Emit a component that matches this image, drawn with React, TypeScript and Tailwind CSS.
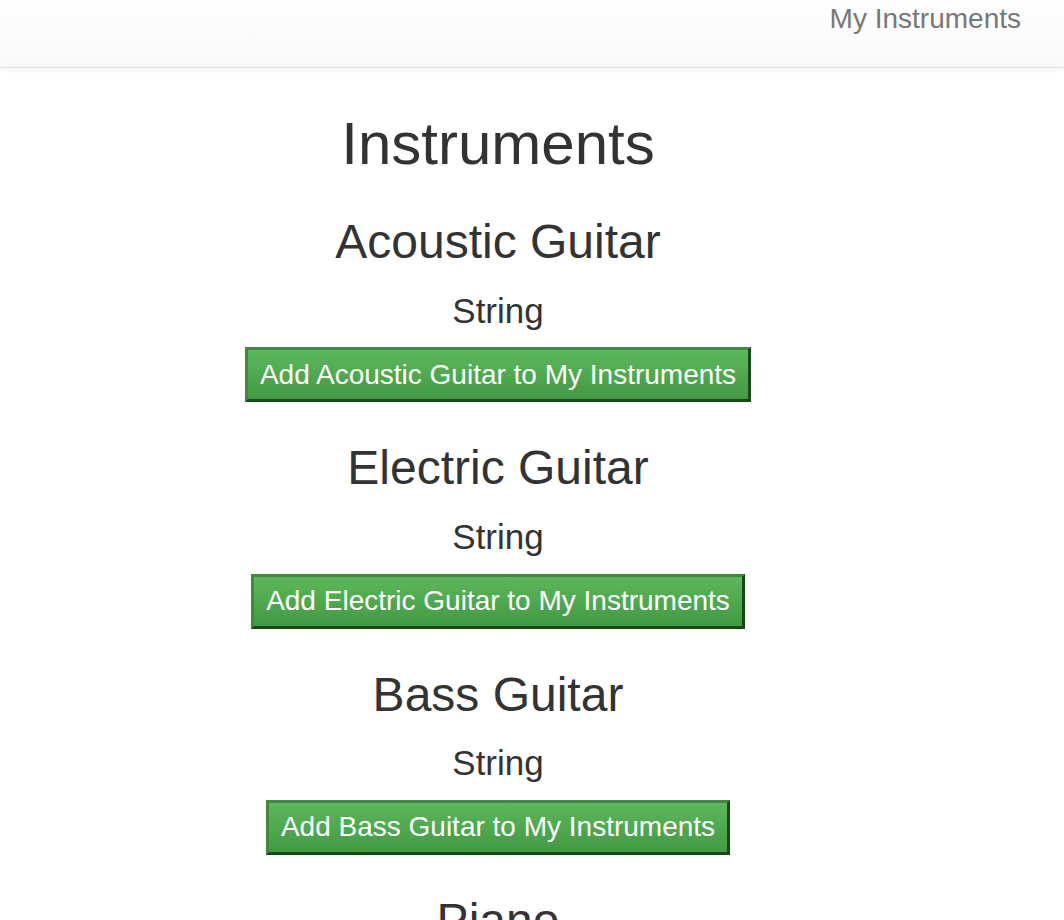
import React from 'react';

const instruments = [
  { name: 'Acoustic Guitar', family: 'String' },
  { name: 'Electric Guitar', family: 'String' },
  { name: 'Bass Guitar', family: 'String' },
  { name: 'Piano', family: 'Keyboard' },
];

export default function App() {
  return (
    <div className="min-h-screen bg-white text-[#333] font-['Liberation_Sans',Arial,sans-serif]">
      {/* Navbar */}
      <nav className="h-[68px] bg-linear-to-b from-white to-[#f8f8f8] border-b border-[#e4e4e4] shadow-[0_1px_6px_rgba(0,0,0,0.07)]">
        <div className="flex justify-end pr-[43px] pt-[5px]">
          <a href="#" className="text-[28px] leading-none text-[#777]">
            My Instruments
          </a>
        </div>
      </nav>

      {/* Content */}
      <main className="pr-[68px] pt-[43px] text-center">
        <h1 className="text-[60px] leading-[1.1] font-normal">Instruments</h1>
        <ul className="mt-[39px] flex flex-col gap-[40px]">
          {instruments.map((item) => (
            <li key={item.name} className="flex flex-col items-center">
              <h2 className="text-[48px] leading-[1.1] font-normal">{item.name}</h2>
              <p className="mt-[23px] text-[35px] leading-[1.1]">{item.family}</p>
              <button
                className="mt-[17px] h-[55px] px-[12px] text-[28px] leading-[40px] text-white bg-linear-to-b from-[#5cb85c] to-[#429a42] border-[3px] border-t-[#3c8c3c] border-l-[#3c8c3c] border-b-[#1d461d] border-r-[#1d461d]"
              >
                Add {item.name} to My Instruments
              </button>
            </li>
          ))}
        </ul>
      </main>
    </div>
  );
}
